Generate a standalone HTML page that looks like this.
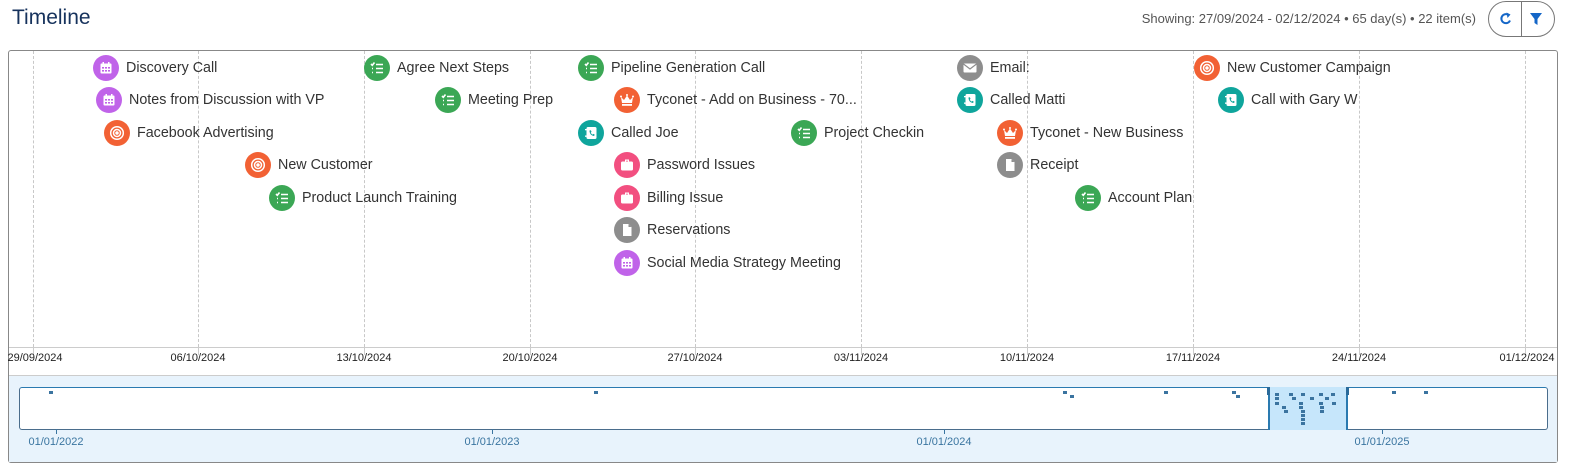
<!DOCTYPE html>
<html><head><meta charset="utf-8"><style>
*{margin:0;padding:0;box-sizing:border-box}
body{width:1592px;height:472px;background:#fff;font-family:"Liberation Sans",Arial,sans-serif;position:relative;overflow:hidden;color:#333}
.abs{position:absolute}
.title{left:12px;top:6px;font-size:21px;color:#16325c}
.info{right:116px;top:11px;font-size:13px;color:#555;white-space:nowrap}
.btns{left:1488px;top:1px;width:67px;height:36px;border:1px solid #777;border-radius:18px}
.btns .d{position:absolute;left:32px;top:0;width:1px;height:34px;background:#777}
.box{left:8px;top:50px;width:1550px;height:413px;border:1px solid #888;border-radius:3px}
.grid{top:51px;height:296px;width:0;border-left:1px dashed #c8c8c8}
.tick{top:347px;height:8px;width:1px;background:#ccc}
.axis{left:9px;top:347px;width:1548px;height:1px;background:#ccc}
.lbl{top:352px;font-size:11px;color:#222;transform:translateX(-50%)}
.nav{left:9px;top:375px;width:1548px;height:87px;background:#e8f3fc;border-top:1px solid #ccc}
.inner{left:19px;top:387px;width:1529px;height:43px;background:#fff;border:1px solid #4a6d8c;border-top-color:#2a7ab0;border-radius:3px}
.sel{left:1268px;top:387px;width:80px;height:43px;background:#c6e6fb;border-left:2px solid #2a7ab0;border-right:2px solid #2a7ab0}
.yl{top:436px;font-size:11px;color:#3a75a0;transform:translateX(-50%)}
.yt{top:429px;width:1px;height:5px;background:#3a75a0}
.dot{width:4px;height:3px;background:#3b74a0}
.it{height:26px;display:flex;align-items:center;font-size:14.3px;color:#333;white-space:nowrap}
.ic{width:26px;height:26px;border-radius:50%;margin-right:7px;flex:none;display:flex;align-items:center;justify-content:center}
.pu{background:#c063e9}.gr{background:#3ba755}.or{background:#f26134}.te{background:#0fa59c}.pk{background:#f24f80}.gy{background:#8d8d8d}
</style></head><body>
<div class="abs title">Timeline</div>
<div class="abs info">Showing: 27/09/2024 - 02/12/2024 • 65 day(s) • 22 item(s)</div>
<div class="abs btns"><div class="d"></div>
<svg class="abs" style="left:9px;top:9px" width="16" height="16" viewBox="0 0 16 16"><path d="M12 9.5A4.5 4.5 0 1 1 10.5 4" fill="none" stroke="#1466c7" stroke-width="2"/><path d="M8.5 1.5L12.5 3.5 9.5 7z" fill="#1466c7"/></svg>
<svg class="abs" style="left:40px;top:10px" width="14" height="14" viewBox="0 0 14 14"><path d="M1 1H13L8.5 7V13L5.5 11V7z" fill="#1466c7"/></svg>
</div>
<div class="abs box"></div>
<div class="abs axis"></div>
<div id="g"></div>
<div class="abs nav"></div>
<div class="abs inner"></div>
<div class="abs sel"></div>
<div id="n"></div>
<div id="items"></div>
<script>
var g='',xs=[33,198,364,530,695,861,1027,1193,1359,1525],ls=['29/09/2024','06/10/2024','13/10/2024','20/10/2024','27/10/2024','03/11/2024','10/11/2024','17/11/2024','24/11/2024','01/12/2024'];
xs.forEach(function(x,i){g+='<div class="abs grid" style="left:'+x+'px"></div><div class="abs tick" style="left:'+x+'px"></div>';
var l=x;if(i==0)l=35;if(i==9)l=1527;g+='<div class="abs lbl" style="left:'+l+'px">'+ls[i]+'</div>';});
document.getElementById('g').innerHTML=g;
var n='';[[56,'01/01/2022'],[492,'01/01/2023'],[944,'01/01/2024'],[1382,'01/01/2025']].forEach(function(a){n+='<div class="abs yt" style="left:'+a[0]+'px"></div><div class="abs yl" style="left:'+a[0]+'px">'+a[1]+'</div>';});
[[49,391],[594,391],[1063,391],[1070,395],[1164,391],[1232,391],[1236,395],[1392,391],[1424,391]].forEach(function(d){n+='<div class="abs dot" style="left:'+d[0]+'px;top:'+d[1]+'px"></div>';});
var sd=[[7,6],[21,6],[33,6],[51,6],[63,6],[7,10],[24,10],[42,10],[57,10],[7,15],[31,15],[51,15],[64,15],[14,19],[31,19],[52,19],[16,23],[33,23],[52,23],[33,27],[33,31],[33,35]];
sd.forEach(function(d){n+='<div class="abs dot" style="left:'+(1268+d[0])+'px;top:'+(387+d[1])+'px"></div>';});
n+='<div class="abs" style="left:1267px;top:387px;width:3px;height:8px;background:#2a6a9a"></div><div class="abs" style="left:1346px;top:387px;width:3px;height:8px;background:#2a6a9a"></div>';
document.getElementById('n').innerHTML=n;
var I={
pu:'<svg width="14" height="14" viewBox="0 0 14 14"><rect x="1.5" y="2.5" width="11" height="10" rx="1" fill="#fff"/><rect x="3.5" y="1" width="1.5" height="3" fill="#fff"/><rect x="9" y="1" width="1.5" height="3" fill="#fff"/><g fill="#c063e9"><rect x="3" y="6" width="2" height="1.6"/><rect x="6" y="6" width="2" height="1.6"/><rect x="9" y="6" width="2" height="1.6"/><rect x="3" y="9" width="2" height="1.6"/><rect x="6" y="9" width="2" height="1.6"/><rect x="9" y="9" width="2" height="1.6"/></g></svg>',
gr:'<svg width="14" height="14" viewBox="0 0 14 14" fill="none" stroke="#fff" stroke-width="1.6"><path d="M1 3l1.3 1.3L4.5 1.5"/><path d="M6 3.5h7M6 7.5h7M6 11.5h7"/><path d="M2 7.5h1M2 11.5h1"/></svg>',
or:'<svg width="16" height="16" viewBox="0 0 16 16" fill="none" stroke="#fff" stroke-width="1.5"><circle cx="8" cy="8" r="6.3"/><circle cx="8" cy="8" r="3.5"/><circle cx="8" cy="8" r="1" fill="#fff"/></svg>',
cr:'<svg width="16" height="16" viewBox="0 0 16 16" fill="#fff"><path d="M2 5l3 3 3-4.5 3 4.5 3-3-1 6H3z"/><rect x="3" y="12" width="10" height="1.8"/><circle cx="2" cy="4.5" r="1"/><circle cx="8" cy="3" r="1"/><circle cx="14" cy="4.5" r="1"/></svg>',
te:'<svg width="14" height="14" viewBox="0 0 14 14"><rect x="2.5" y="1" width="10" height="12" rx="1.5" fill="#fff"/><rect x="1" y="3" width="2.5" height="1.3" fill="#fff"/><rect x="1" y="9.5" width="2.5" height="1.3" fill="#fff"/><path d="M5.5 4.5c0 3 1.5 5 4.5 5.5l.8-1.3-1.5-.8-.7.7c-1-.5-1.5-1.2-1.8-2.1l.7-.6-.6-1.6z" fill="#0fa59c"/></svg>',
pk:'<svg width="14" height="14" viewBox="0 0 14 14" fill="#fff"><path d="M5 1.5h4v2H8V2.7H6V3.5H5z"/><rect x="1" y="3.5" width="12" height="9" rx="1.5"/></svg>',
gy:'<svg width="14" height="14" viewBox="0 0 14 14" fill="#fff"><path d="M3 1h5.5L11.5 4v9H3z"/><path d="M8.5 1v3h3" fill="#8d8d8d"/></svg>',
em:'<svg width="16" height="14" viewBox="0 0 16 14"><rect x="1.5" y="2.5" width="13" height="9" rx="1" fill="#fff"/><path d="M1.5 3l6.5 5 6.5-5" fill="none" stroke="#8d8d8d" stroke-width="1.2"/></svg>'};
var C={pu:'pu',gr:'gr',or:'or',cr:'or',te:'te',pk:'pk',gy:'gy',em:'gy'};
var rows=[68,100,133,165,198,230,263];
var items=[[106,0,'pu','Discovery Call'],[109,1,'pu','Notes from Discussion with VP'],[117,2,'or','Facebook Advertising'],[258,3,'or','New Customer'],[282,4,'gr','Product Launch Training'],[377,0,'gr','Agree Next Steps'],[448,1,'gr','Meeting Prep'],[591,0,'gr','Pipeline Generation Call'],[627,1,'cr','Tyconet - Add on Business - 70...'],[591,2,'te','Called Joe'],[627,3,'pk','Password Issues'],[627,4,'pk','Billing Issue'],[627,5,'gy','Reservations'],[627,6,'pu','Social Media Strategy Meeting'],[804,2,'gr','Project Checkin'],[970,0,'em','Email:'],[970,1,'te','Called Matti'],[1010,2,'cr','Tyconet - New Business'],[1010,3,'gy','Receipt'],[1088,4,'gr','Account Plan'],[1207,0,'or','New Customer Campaign'],[1231,1,'te','Call with Gary W']];
var h='';items.forEach(function(a){h+='<div class="abs it" style="left:'+(a[0]-13)+'px;top:'+(rows[a[1]]-13)+'px"><div class="ic '+C[a[2]]+'">'+I[a[2]]+'</div>'+a[3]+'</div>';});
document.getElementById('items').innerHTML=h;
</script>
</body></html>
